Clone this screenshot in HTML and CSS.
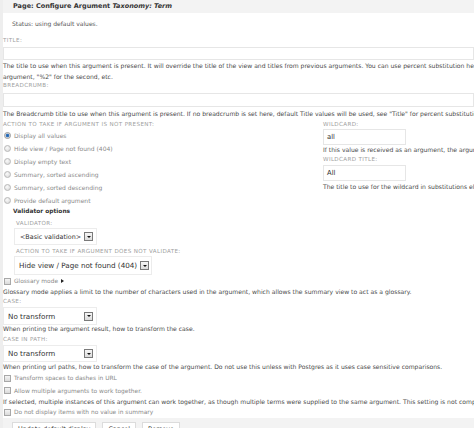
FILE: index.html
```html
<!DOCTYPE html>
<html>
<head>
<meta charset="utf-8">
<link rel="stylesheet" href="styles.css">
</head>
<body>
<div class="page">
  <div class="hdr">Page: Configure Argument <em>Taxonomy: Term</em></div>
  <div class="status">Status: using default values.</div>
  <div class="lbl lbl-title">Title:</div>
  <div class="text-input ti-title"></div>
  <div class="desc desc-title">The title to use when this argument is present. It will override the title of the view and titles from previous arguments. You can use percent substitution here to replace with argument titles. Use "%1" for the first<br>argument, "%2" for the second, etc.</div>
  <div class="lbl lbl-bc">Breadcrumb:</div>
  <div class="text-input ti-bc"></div>
  <div class="desc desc-bc">The Breadcrumb title to use when this argument is present. If no breadcrumb is set here, default Title values will be used, see "Title" for percent substitutions.</div>

  <div class="cols">
    <div class="col-left">
      <div class="lbl lbl-action">Action to take if argument is not present:</div>
      <div class="radios">
        <div class="radio-row"><span class="radio on"></span>Display all values</div>
        <div class="radio-row"><span class="radio"></span>Hide view / Page not found (404)</div>
        <div class="radio-row"><span class="radio"></span>Display empty text</div>
        <div class="radio-row"><span class="radio"></span>Summary, sorted ascending</div>
        <div class="radio-row"><span class="radio"></span>Summary, sorted descending</div>
        <div class="radio-row"><span class="radio"></span>Provide default argument</div>
      </div>
    </div>
    <div class="col-right">
      <div class="lbl lbl-wild">Wildcard:</div>
      <div class="text-input wild-input">all</div>
      <div class="desc desc-wild">If this value is received as an argument, the argument will be ignored; i.e, "all values"</div>
      <div class="lbl lbl-wildt">Wildcard title:</div>
      <div class="text-input wild-input">All</div>
      <div class="desc desc-wildt">The title to use for the wildcard in substitutions elsewhere.</div>
    </div>
  </div>

  <div class="vhead">Validator options</div>
  <div class="validator">
    <div class="lbl lbl-validator">Validator:</div>
    <div class="select s1"><span>&lt;Basic validation&gt;</span><span class="sel-btn"></span></div>
    <div class="lbl lbl-novalid">Action to take if argument does not validate:</div>
    <div class="select s2"><span>Hide view / Page not found (404)</span><span class="sel-btn"></span></div>
  </div>

  <div class="check-row cr-gloss"><span class="check"></span>Glossary mode<span class="tri"></span></div>
  <div class="desc desc-gloss">Glossary mode applies a limit to the number of characters used in the argument, which allows the summary view to act as a glossary.</div>
  <div class="lbl lbl-case">Case:</div>
  <div class="select s3"><span>No transform</span><span class="sel-btn"></span></div>
  <div class="desc desc-case">When printing the argument result, how to transform the case.</div>
  <div class="lbl lbl-casepath">Case in path:</div>
  <div class="select s4"><span>No transform</span><span class="sel-btn"></span></div>
  <div class="desc desc-path">When printing url paths, how to transform the case of the argument. Do not use this unless with Postgres as it uses case sensitive comparisons.</div>
  <div class="check-row cr-a"><span class="check"></span>Transform spaces to dashes in URL</div>
  <div class="check-row cr-b"><span class="check"></span>Allow multiple arguments to work together.</div>
  <div class="desc desc-multi">If selected, multiple instances of this argument can work together, as though multiple terms were supplied to the same argument. This setting is not compatible with the "Reduce duplicates" setting.</div>
  <div class="check-row cr-c"><span class="check"></span>Do not display items with no value in summary</div>

  <div class="actions">
    <span class="btn">Update default display</span>
    <span class="btn">Cancel</span>
    <span class="btn">Remove</span>
  </div>
</div>
</body>
</html>
```

FILE: styles.css
```css
html, body {
  margin: 0;
  padding: 0;
  overflow: hidden;
  background: #fff;
}
body {
  width: 474px;
  height: 428px;
  font-family: "DejaVu Sans", Verdana, sans-serif;
  color: #444;
}
.page {
  border-left: 3px solid #eeeeee;
  height: 428px;
  box-sizing: border-box;
  white-space: nowrap;
}
.hdr {
  height: 13px;
  line-height: 13px;
  background: #f3f3f3;
  padding-left: 10px;
  font-weight: bold;
  font-size: 6.5px;
  color: #333;
}
.hdr em { font-style: italic; }
.status {
  height: 22px;
  line-height: 22px;
  padding-left: 9px;
  font-size: 6px;
  color: #555;
}
.lbl {
  text-transform: uppercase;
  font-size: 5.6px;
  letter-spacing: 0.35px;
  color: #a0a0a0;
}
.desc {
  font-size: 6.08px;
  color: #4a4a4a;
  white-space: nowrap;
}
.text-input {
  border: 1px solid #e6e6e6;
  background: #fff;
  box-sizing: border-box;
}
.lbl-title { height: 11px; line-height: 11px; }
.ti-title { height: 13px; margin-top: 1px; }
.desc-title { line-height: 11px; }
.lbl-bc { line-height: 7px; }
.ti-bc { height: 14px; margin-top: 4px; }
.desc-bc { line-height: 14px; }

.cols { display: flex; }
.col-left { width: 320px; flex: none; }
.lbl-action { line-height: 7px; }
.radios { margin-top: 1px; }
.radio-row {
  height: 13px;
  display: flex;
  align-items: center;
  font-size: 6px;
  color: #8a8a8a;
}
.radio {
  width: 7px;
  height: 7px;
  box-sizing: border-box;
  border-radius: 50%;
  border: 1px solid #b8b8b8;
  background: radial-gradient(circle at 40% 35%, #fafafa, #d6d6d6);
  margin: 0 3px 0 1px;
  flex: none;
}
.radio.on {
  background: radial-gradient(circle, #1d5fa8 0, #3b7bc4 1.5px, #e0e0e0 2.2px);
  border-color: #999;
}

.lbl-wild { line-height: 7px; }
.wild-input {
  width: 83px;
  height: 16px;
  margin-top: 1px;
  font-size: 6.8px;
  line-height: 14px;
  padding-left: 3px;
  color: #333;
}
.desc-wild { line-height: 10px; }
.lbl-wildt { line-height: 9px; }
.desc-wildt { line-height: 12px; }

.vhead {
  line-height: 9px;
  padding-left: 10px;
  font-weight: bold;
  font-size: 5.9px;
  color: #333;
}
.validator { padding-left: 11px; }
.lbl-validator { margin-top: 4px; line-height: 7px; padding-left: 2px; }
.lbl-novalid { margin-top: 3px; line-height: 7px; padding-left: 2px; }

.select {
  display: flex;
  align-items: center;
  justify-content: space-between;
  border: 1px solid #ececec;
  background: #fff;
  box-sizing: border-box;
  color: #333;
}
.s1 { margin-top: 1px; height: 17px; width: 83px; padding: 0 3px 0 5px; font-size: 6.4px; }
.s2 { margin-top: 1px; height: 19px; width: 138px; padding: 0 2px 0 4px; font-size: 7.2px; }
.s3 { margin-top: 2px; height: 18px; width: 94px; padding: 0 3px 0 4px; font-size: 7.2px; }
.s4 { margin-top: 2px; height: 17px; width: 94px; padding: 0 3px 0 4px; font-size: 7.2px; }
.sel-btn {
  width: 9px;
  height: 9px;
  border: 1px solid #7a7a7a;
  background: linear-gradient(#f6f6f6, #dcdcdc);
  box-sizing: border-box;
  display: flex;
  align-items: center;
  justify-content: center;
  flex: none;
}
.sel-btn::after {
  content: "";
  border-left: 2px solid transparent;
  border-right: 2px solid transparent;
  border-top: 2px solid #111;
}

.check-row {
  display: flex;
  align-items: center;
  font-size: 5.9px;
  color: #8a8a8a;
}
.check {
  width: 7px;
  height: 7px;
  box-sizing: border-box;
  border: 1px solid #a8a8a8;
  background: linear-gradient(#f4f4f4, #dadada);
  margin: 0 3px 0 1px;
  flex: none;
}
.tri {
  width: 0;
  height: 0;
  border-top: 2.5px solid transparent;
  border-bottom: 2.5px solid transparent;
  border-left: 3px solid #222;
  margin-left: 3px;
}
.cr-gloss { height: 12px; }
.desc-gloss { line-height: 10px; }
.lbl-case { line-height: 8px; }
.desc-case { line-height: 8px; }
.lbl-casepath { margin-top: 2px; line-height: 8px; }
.desc-path { line-height: 10px; }
.cr-a { height: 12px; }
.cr-b { height: 13px; }
.desc-multi { line-height: 9px; }
.cr-c { height: 12px; }

.actions {
  background: #f3f3f3;
  height: 20px;
  padding: 4px 0 0 9px;
  box-sizing: border-box;
  display: flex;
  gap: 6px;
}
.btn {
  display: block;
  height: 14px;
  line-height: 12px;
  padding: 0 5px;
  border: 1px solid #dcdcdc;
  background: #fff;
  font-size: 6.4px;
  color: #333;
  box-sizing: border-box;
}
```
